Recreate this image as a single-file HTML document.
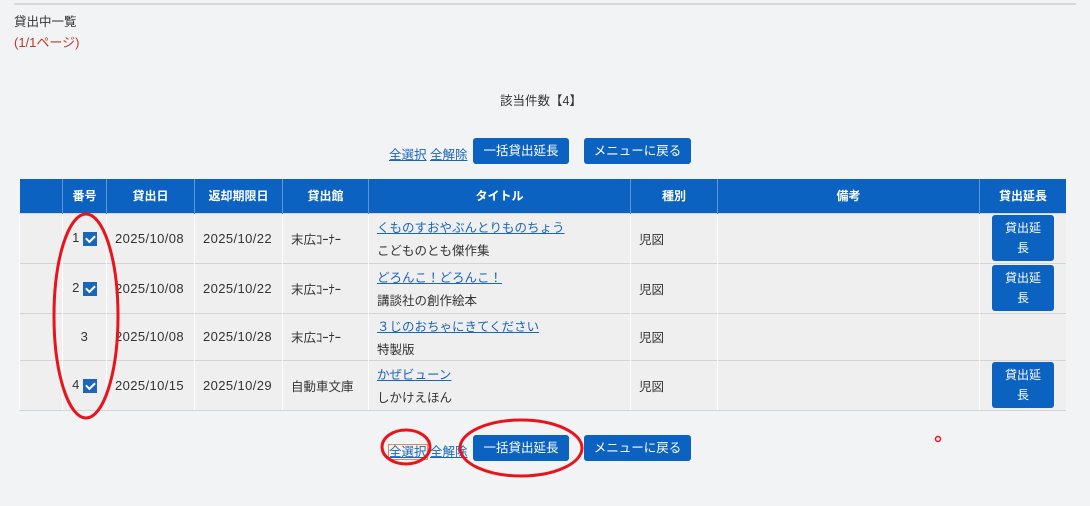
<!DOCTYPE html>
<html><head><meta charset="utf-8"><style>
*{margin:0;padding:0;box-sizing:border-box}
body{width:1090px;height:506px;background:#f2f3f5;font-family:"Liberation Sans","Noto Sans CJK JP",sans-serif;font-size:12px;color:#333;position:relative;overflow:hidden}
.a{position:absolute}
.btn{position:absolute;background:#0b62c0;color:#fff;border-radius:3px;font-size:12.5px;text-align:center;line-height:26px;height:26px}
a{color:#1b66b8;text-decoration:underline}
table{position:absolute;left:19px;top:179px;border-collapse:collapse;width:1047px}
th{background:#0b62c0;color:#fff;font-weight:bold;height:34px;border-left:1px solid #5d95d6;font-size:12px}
td{background:#efefef;border-top:1px solid #d4d4d4;border-left:1px solid #fff;font-size:12.5px;vertical-align:middle;padding:0 8px}
td.d{font-size:13px;letter-spacing:0.4px}
td.c{text-align:center}
.cb{display:inline-block;width:14px;height:14px;background:#1b66b8;vertical-align:middle;position:relative;margin-left:3px}
.cb:after{content:"";position:absolute;left:3px;top:3px;width:7px;height:4px;border-left:2px solid #fff;border-bottom:2px solid #fff;transform:rotate(-45deg)}
.sb{display:inline-block;background:#0b62c0;color:#fff;border-radius:3px;width:62px;height:46px;line-height:20px;padding-top:3px;text-align:center;font-size:12px}
</style></head><body>
<div class="a" style="left:14px;top:3px;width:1062px;height:2px;background:#d6d8dc"></div>
<div class="a" style="left:14px;top:11px;font-size:12.5px">貸出中一覧</div>
<div class="a" style="left:14px;top:32px;color:#c0392b;font-size:13px">(1/1ページ)</div>
<div class="a" style="left:0;width:1082px;top:90px;text-align:center;font-size:12.5px">該当件数【4】</div>
<div class="a" style="left:389px;top:144px;font-size:12.5px"><a>全選択</a> <a>全解除</a></div>
<div class="btn" style="left:473px;top:138px;width:96px">一括貸出延長</div>
<div class="btn" style="left:584px;top:138px;width:107px">メニューに戻る</div>
<table>
<tr><th style="width:43px;border-left:none"></th><th style="width:44px">番号</th><th style="width:88px">貸出日</th><th style="width:88px">返却期限日</th><th style="width:86px">貸出館</th><th style="width:262px">タイトル</th><th style="width:87px">種別</th><th style="width:262px">備考</th><th>貸出延長</th></tr>
<tr style="height:50px"><td></td><td class="c d">1<span class="cb"></span></td><td class="d">2025/10/08</td><td class="d">2025/10/22</td><td>末広ｺｰﾅｰ</td><td><a>くものすおやぶんとりものちょう</a><div style="margin-top:4px">こどものとも傑作集</div></td><td>児図</td><td></td><td class="c"><span class="sb">貸出延<br>長</span></td></tr>
<tr style="height:50px"><td></td><td class="c d">2<span class="cb"></span></td><td class="d">2025/10/08</td><td class="d">2025/10/22</td><td>末広ｺｰﾅｰ</td><td><a>どろんこ！どろんこ！</a><div style="margin-top:4px">講談社の創作絵本</div></td><td>児図</td><td></td><td class="c"><span class="sb">貸出延<br>長</span></td></tr>
<tr style="height:47px"><td></td><td class="c d">3</td><td class="d">2025/10/08</td><td class="d">2025/10/28</td><td>末広ｺｰﾅｰ</td><td><a>３じのおちゃにきてください</a><div style="margin-top:4px">特製版</div></td><td>児図</td><td></td><td></td></tr>
<tr style="height:50px"><td></td><td class="c d">4<span class="cb"></span></td><td class="d">2025/10/15</td><td class="d">2025/10/29</td><td>自動車文庫</td><td><a>かぜビューン</a><div style="margin-top:4px">しかけえほん</div></td><td>児図</td><td></td><td class="c"><span class="sb">貸出延<br>長</span></td></tr>
</table>
<div class="a" style="left:19px;top:410px;width:1047px;height:1px;background:#d4d4d4"></div>
<div class="a" style="left:389px;top:441px;font-size:12.5px"><a style="outline:1px solid #e08a5a">全選択</a> <a>全解除</a></div>
<div class="btn" style="left:473px;top:435px;width:96px">一括貸出延長</div>
<div class="btn" style="left:584px;top:435px;width:107px">メニューに戻る</div>
<svg class="a" style="left:0;top:0" width="1090" height="506">
<g fill="none" stroke="#e8141c" stroke-width="3">
<ellipse cx="86" cy="316" rx="32" ry="102"/>
<ellipse cx="406" cy="447" rx="24" ry="17"/>
<ellipse cx="521" cy="448" rx="61" ry="28"/>
<circle cx="938" cy="439" r="2.5" stroke-width="1.5"/>
</g></svg>
</body></html>
